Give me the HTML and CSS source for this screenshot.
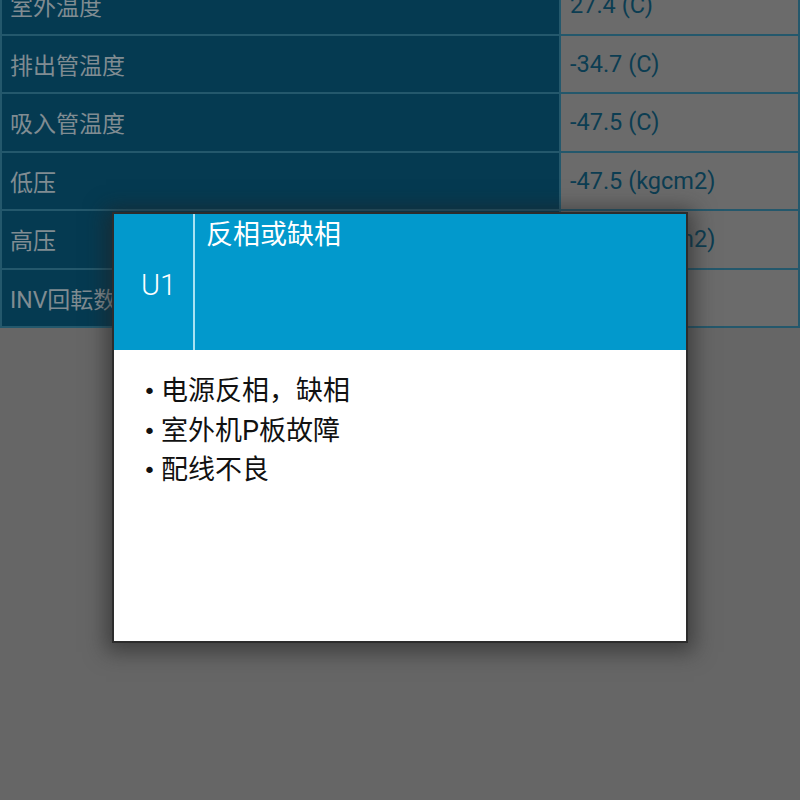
FILE: index.html
```html
<!DOCTYPE html>
<html lang="zh">
<head>
<meta charset="utf-8">
<link rel="stylesheet" href="styles.css">
</head>
<body>
<div class="table">
  <div class="row"><div class="label">室外温度</div><div class="value">27.4 (C)</div></div>
  <div class="row"><div class="label">排出管温度</div><div class="value">-34.7 (C)</div></div>
  <div class="row"><div class="label">吸入管温度</div><div class="value">-47.5 (C)</div></div>
  <div class="row"><div class="label">低压</div><div class="value">-47.5 (kgcm2)</div></div>
  <div class="row"><div class="label">高压</div><div class="value">-47.5 (kgcm2)</div></div>
  <div class="row"><div class="label">INV回転数</div><div class="value">0 (rps)</div></div>
</div>
<div class="dialog">
  <div class="dialog-head">
    <div class="code">U1</div>
    <div class="title">反相或缺相</div>
  </div>
  <ul class="causes">
    <li><span class="dot">•</span>电源反相，缺相</li>
    <li><span class="dot">•</span>室外机P板故障</li>
    <li><span class="dot">•</span>配线不良</li>
  </ul>
</div>
</body>
</html>
```
FILE: styles.css
```css
html, body {
  margin: 0;
  padding: 0;
  height: 100%;
  overflow: hidden;
}
body {
  background: #666666;
  font-family: Roboto, "Noto Sans CJK SC", sans-serif;
  position: relative;
}
.table {
  margin-top: -23px;
  width: 800px;
  box-sizing: border-box;
  border-left: 2px solid #24586c;
  border-right: 2px solid #24586c;
}
.row {
  display: flex;
  height: 58.5px;
  box-sizing: border-box;
  border-bottom: 2px solid #24586c;
}
.label {
  width: 559px;
  box-sizing: border-box;
  background: #053a51;
  color: #808c92;
  font-size: 23px;
  padding-left: 8px;
  display: flex;
  align-items: center;
  border-right: 2px solid #24586c;
}
.value {
  flex: 1;
  background: #6b6b6b;
  color: #0c3d52;
  font-size: 23.5px;
  padding-left: 9px;
  display: flex;
  align-items: center;
}
.dialog {
  position: absolute;
  left: 112px;
  top: 212px;
  width: 576px;
  height: 431px;
  box-sizing: border-box;
  border: 2px solid #2c2c2c;
  background: #ffffff;
  box-shadow: 0 3px 20px 6px rgba(35, 35, 35, 0.6);
}
.dialog-head {
  display: flex;
  height: 136px;
  background: #0299cc;
  color: #ffffff;
}
.code {
  width: 81px;
  border-right: 2px solid #a8e2f2;
  display: flex;
  align-items: center;
  justify-content: center;
  font-size: 29px;
  font-weight: 300;
  padding: 6px 0 0 10px;
  box-sizing: border-box;
}
.title {
  font-size: 27px;
  padding: 4px 0 0 11px;
  line-height: 34px;
}
.causes {
  list-style: none;
  margin: 0;
  padding: 22px 0 0 29px;
  font-size: 27px;
  line-height: 39.5px;
  color: #111111;
}
.causes li {
  display: flex;
  align-items: center;
}
.dot {
  width: 18px;
  font-family: "DejaVu Sans", sans-serif;
  font-size: 22px;
}
```
